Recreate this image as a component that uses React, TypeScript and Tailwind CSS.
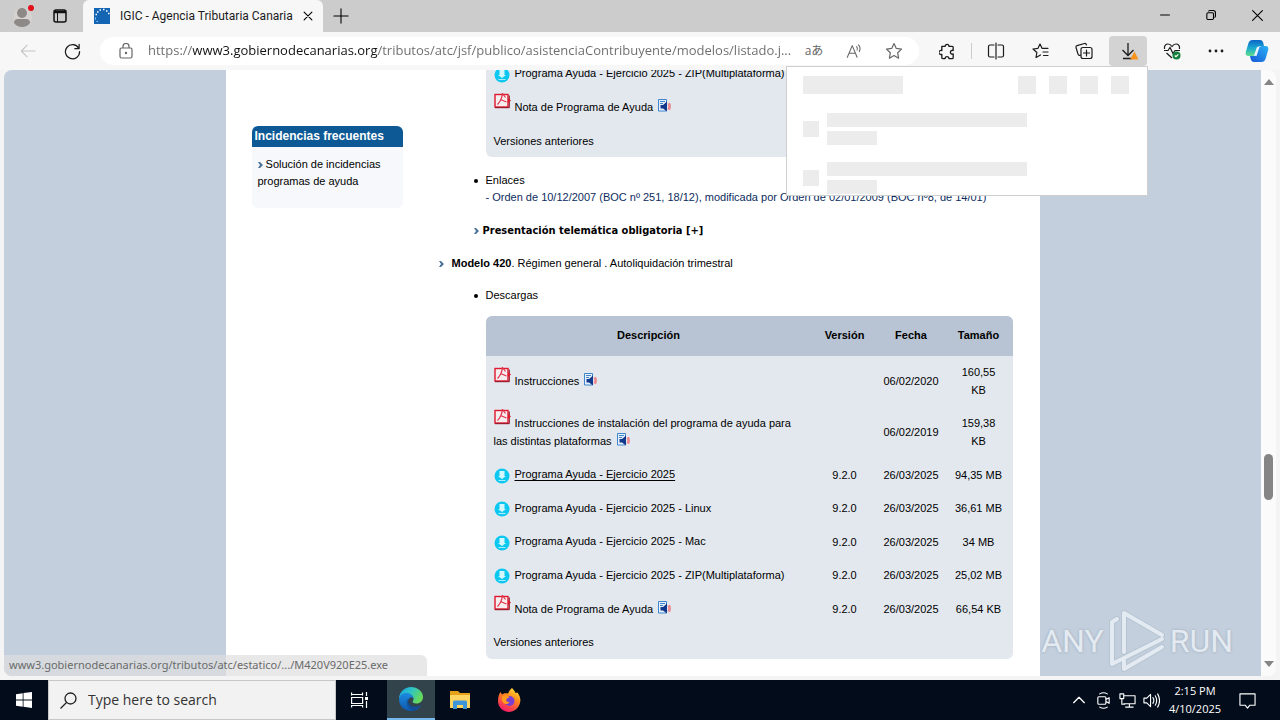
import type { ReactNode } from "react";

interface FileRow {
  kind: "pdf" | "app";
  name: string;
  version?: string;
  date: string;
  size: string;
  audio?: boolean;
  tall?: boolean;
  hovered?: boolean;
}

const FILES_415: FileRow[] = [
  { kind: "app", name: "Programa Ayuda - Ejercicio 2025 - ZIP(Multiplataforma)", date: "", size: "" },
  { kind: "pdf", name: "Nota de Programa de Ayuda", date: "", size: "", audio: true },
];

const FILES_420: FileRow[] = [
  { kind: "pdf", name: "Instrucciones", date: "06/02/2020", size: "160,55 KB", audio: true, tall: true },
  {
    kind: "pdf",
    name: "Instrucciones de instalación del programa de ayuda para las distintas plataformas",
    date: "06/02/2019",
    size: "159,38 KB",
    audio: true,
    tall: true,
  },
  { kind: "app", name: "Programa Ayuda - Ejercicio 2025", version: "9.2.0", date: "26/03/2025", size: "94,35 MB", hovered: true },
  { kind: "app", name: "Programa Ayuda - Ejercicio 2025 - Linux", version: "9.2.0", date: "26/03/2025", size: "36,61 MB" },
  { kind: "app", name: "Programa Ayuda - Ejercicio 2025 - Mac", version: "9.2.0", date: "26/03/2025", size: "34 MB" },
  { kind: "app", name: "Programa Ayuda - Ejercicio 2025 - ZIP(Multiplataforma)", version: "9.2.0", date: "26/03/2025", size: "25,02 MB" },
  { kind: "pdf", name: "Nota de Programa de Ayuda", version: "9.2.0", date: "26/03/2025", size: "66,54 KB", audio: true },
];

function PdfIcon() {
  return (
    <svg viewBox="0 0 17 17" className="-mt-2 mr-1 inline-block h-[17px] w-[17px] align-[2px]">
      <rect x="1" y="2.5" width="13" height="12.5" fill="#f6eeee" stroke="#e0182d" strokeWidth="1.4" />
      <path d="M1 15.7h14.3V3.5" fill="none" stroke="#8c1020" strokeWidth="1" />
      <path d="M3.500 12.500C6 10 8 6.500 8.500 1M6.500 7.500l6 2.500M8.500 1.500l3 4" fill="none" stroke="#e0304a" strokeWidth="1.200" />
      <path d="M14 6l3 2.500L14 11z" fill="#e0182d" />
    </svg>
  );
}

function AppIcon() {
  return (
    <svg viewBox="0 0 16 16" className="mr-[5px] inline-block h-4 w-4 align-middle">
      <circle cx="8" cy="8" r="7.500" fill="#0cc8f0" />
      <path d="M5.500 3h5v5h1.500L8 11 4 8h1.500z" fill="#d4f6fd" />
      <path d="M4.500 12.500h7" stroke="#a9ecfa" strokeWidth="1.200" />
    </svg>
  );
}

function AudioIcon() {
  return (
    <svg viewBox="0 0 13 14" className="-mt-1 ml-[5px] inline-block h-3.5 w-[13px] align-[-2px]">
      <path d="M.5.500h8v11.500h-8z" fill="#e8f1fb" stroke="#3d85cc" />
      <path d="M2 2.500h5M2 4.500h3" stroke="#3d85cc" />
      <path d="M2.500 6H5l4-3.500v10L5 9.500H2.500z" fill="#123a8c" />
      <path d="M10 4.500q2 3 0 6M11.500 4q1.500 3.500 0 7" fill="none" stroke="#ee7f83" strokeWidth="1.200" />
    </svg>
  );
}

function Chevron() {
  return (
    <svg viewBox="0 0 5 6" className="inline-block h-1.5 w-[5px] shrink-0">
      <path d="M0 0h2l3 3-3 3H0l2-3z" fill="#4a7299" />
    </svg>
  );
}

function FileTable({ files, header }: { files: FileRow[]; header?: boolean }) {
  return (
    <table
      className={`w-full table-fixed overflow-hidden rounded-b-md bg-[#e3e8ef] text-center leading-[18px] ${
        header ? "rounded-t-md" : ""
      }`}
    >
      <colgroup>
        <col />
        <col className="w-[66px]" />
        <col className="w-[67px]" />
        <col className="w-[68px]" />
      </colgroup>
      {header && (
        <thead>
          <tr className="h-10 bg-[#b8c4d3]">
            <th className="pb-0.5">Descripción</th>
            <th className="pb-0.5">Versión</th>
            <th className="pb-0.5">Fecha</th>
            <th className="pb-0.5">Tamaño</th>
          </tr>
        </thead>
      )}
      <tbody>
        {files.map((f) => (
          <tr key={f.name} className={f.tall ? "h-[51px] [&>td]:pb-0.5" : "odd:h-[33px] even:h-[34px]"}>
            <td className="pr-4 pl-2 text-left">
              {f.kind === "pdf" ? <PdfIcon /> : <AppIcon />}
              <a href="#descarga" className={f.hovered ? "underline underline-offset-2" : ""}>
                {f.name}
              </a>
              {f.audio && <AudioIcon />}
            </td>
            <td>{f.version}</td>
            <td>{f.date}</td>
            <td className="px-[9px]">{f.size}</td>
          </tr>
        ))}
        <tr className="odd:h-[33px] even:h-[34px]">
          <td colSpan={4} className="pl-2 text-left">
            <a href="#versiones">Versiones anteriores</a>
          </td>
        </tr>
      </tbody>
    </table>
  );
}

function IconButton({ label, className = "w-11", children }: { label: string; className?: string; children: ReactNode }) {
  return (
    <button type="button" aria-label={label} className={`flex h-[30px] shrink-0 items-center justify-center ${className}`}>
      {children}
    </button>
  );
}

function Line({ d, className = "h-[18px] w-[18px]", width = 1.2 }: { d: string; className?: string; width?: number }) {
  return (
    <svg viewBox="0 0 18 18" className={className} fill="none" stroke="currentColor" strokeWidth={width} strokeLinecap="round" strokeLinejoin="round">
      <path d={d} />
    </svg>
  );
}

const STAR = "M9 1.500l2.300 4.900 5.200.7-3.800 3.700.9 5.400L9 13.600l-4.600 2.600.9-5.400L1.500 7.100l5.200-.7z";

function TitleBar() {
  return (
    <div className="flex h-8 shrink-0 bg-[#cccccc]">
      <div className="flex w-[83px] shrink-0 items-center gap-[18px] pl-3.5">
        <button type="button" aria-label="Profile" className="h-6 w-[21px]">
          <svg viewBox="0 0 21 24" className="h-6 w-[21px]">
            <circle cx="8.500" cy="13" r="9.500" fill="#d6d2cf" />
            <circle cx="8" cy="9" r="5" fill="#8c8986" />
            <path d="M0 19q0-4 4-4h8q4 0 4 4-3 4-8 4t-8-4z" fill="#8c8986" />
            <circle cx="17" cy="4" r="3" fill="#e5101c" />
          </svg>
        </button>
        <button type="button" aria-label="Tab actions">
          <svg viewBox="0 0 14 14" className="h-3.5 w-3.5" fill="none" stroke="#111">
            <rect x="1" y="1" width="12" height="12" rx="2" strokeWidth="1.500" />
            <path d="M1 3h12" strokeWidth="2.500" />
            <path d="M4.500 4v9" />
          </svg>
        </button>
      </div>
      <div className="flex w-60 shrink-0 items-center rounded-t-md bg-[#f7f7f7] pr-2.5 pl-[11px]">
        <svg viewBox="0 0 16 16" className="h-4 w-4 shrink-0">
          <path d="M0 0h16v16H0z" fill="#1565b5" />
          <path d="M3 4h1.500M5.500 2H7M9 1.500h1.500M12 3h1.500M14 5.500h1.500M1.500 6.500H3" stroke="#fff" strokeWidth="1.300" />
          <path d="M1.500 9.500v2M2.500 13.500h1.500" stroke="#9cc4ea" />
        </svg>
        <span className="ml-2.5 flex-1 font-[Roboto,sans-serif] text-xs whitespace-nowrap text-[#1b1b1b]">
          IGIC - Agencia Tributaria Canaria
        </span>
        <button type="button" aria-label="Close tab">
          <Line d="M2 2l14 14M16 2L2 16" className="h-2.5 w-2.5" width={2} />
        </button>
      </div>
      <button type="button" aria-label="New tab" className="flex w-9 items-center justify-center">
        <Line d="M9 1v16M1 9h16" className="h-4 w-4" />
      </button>
      <div className="ml-auto flex">
        <IconButton label="Minimize" className="w-[46px]">
          <Line d="M1 9h16" className="h-2.5 w-2.5" width={1.8} />
        </IconButton>
        <IconButton label="Restore" className="w-[46px]">
          <Line d="M3.500 5h8q2 0 2 2v8q0 2-2 2h-8q-2 0-2-2V7q0-2 2-2zM5 2q.5-1 2-1h6q4 0 4 4v6q0 1.500-1 2" className="h-2.5 w-2.5" width={2} />
        </IconButton>
        <IconButton label="Close" className="w-[46px]">
          <Line d="M1 1l16 16M17 1L1 17" className="h-[11px] w-[11px]" width={1.8} />
        </IconButton>
      </div>
    </div>
  );
}

function DownloadsFlyout() {
  return (
    <div className="absolute top-[34px] right-[132px] z-20 h-[130px] w-[362px] overflow-hidden border border-[#cfcfcf] bg-white px-4 pt-[9px]">
      <div className="flex items-center gap-[13px] pr-0.5 pb-0.5">
        <div className="mr-auto h-[18px] w-[100px] bg-[#ececec]" />
        <div className="h-[18px] w-[18px] bg-[#ececec]" />
        <div className="h-[18px] w-[18px] bg-[#ececec]" />
        <div className="h-[18px] w-[18px] bg-[#ececec]" />
        <div className="h-[18px] w-[18px] bg-[#ececec]" />
      </div>
      {[0, 1].map((i) => (
        <div key={i} className="mt-[17px] flex h-8 items-center gap-2">
          <div className="h-4 w-4 bg-[#ececec]" />
          <div className="flex flex-col gap-1">
            <div className="h-3.5 w-[200px] bg-[#ececec]" />
            <div className="h-3.5 w-[50px] bg-[#ececec]" />
          </div>
        </div>
      ))}
    </div>
  );
}

function Toolbar() {
  return (
    <div className="relative flex h-[38px] shrink-0 items-center bg-[#f7f7f7] pr-1 pl-1.5 text-[#1b1b1b]">
      <IconButton label="Back">
        <Line d="M17 9H2M8 2.500L1.500 9 8 15.500" className="h-4 w-4 text-[#c4c4c4]" />
      </IconButton>
      <IconButton label="Refresh">
        <Line d="M15.500 5.500A7.500 7.500 0 1 0 16.500 9M16 1.500v4.500h-4.500" className="h-[17px] w-[17px]" width={1.3} />
      </IconButton>
      <div className="mr-1.5 ml-1.5 flex h-7 flex-1 items-center rounded-full bg-white pl-1 text-[#666]">
        <IconButton label="View site information">
          <svg viewBox="0 0 14 16" className="h-4 w-3.5" fill="none" stroke="currentColor" strokeWidth="1.200">
            <rect x="1" y="5" width="12" height="10" rx="1.500" />
            <path d="M4 5V3.500a3 3 0 0 1 6 0V5" />
            <circle cx="7" cy="10" r=".6" fill="currentColor" />
          </svg>
        </IconButton>
        <input
          type="text"
          aria-label="Address and search bar"
          readOnly
          defaultValue="https://www3.gobiernodecanarias.org/tributos/atc/jsf/publico/asistenciaContribuyente/modelos/listado.j..."
          className="min-w-0 flex-1 bg-[linear-gradient(90deg,#6b6b6b_45px,#111_45px,#111_230px,#6b6b6b_230px)] bg-clip-text text-[13px] text-transparent outline-none"
        />
        <button type="button" aria-label="Translate" className="w-10 text-xs">
          aあ
        </button>
        <IconButton label="Read aloud" className="w-10">
          <Line d="M1.500 16L7 3l5.500 13M3.500 11.500h7M12 4q1.500 2 .5 4M14 2q3 3 1 7.500" className="h-4 w-4" />
        </IconButton>
        <IconButton label="Add to favorites" className="w-10">
          <Line d={STAR} />
        </IconButton>
        <span className="w-[5px]" />
      </div>
      <IconButton label="Extensions">
        <Line d="M3 3.500h3.500a2 2 0 1 1 4 0H14q1 0 1 1V8a2 2 0 1 0 0 3.500v4q0 1-1 1h-3.500a2 2 0 1 0-4 0H4q-1 0-1-1V12a2.200 2.200 0 1 1 0-4z" className="h-[17px] w-[17px]" width={1.4} />
      </IconButton>
      <span className="mx-0.5 h-4 w-px bg-[#cdcdcd]" />
      <IconButton label="Split screen">
        <Line d="M7 3H3Q1.500 3 1.500 4.500v9Q1.500 15 3 15h4M11 3h4q1.500 0 1.500 1.500v9q0 1.500-1.500 1.500h-4M9 1v16" />
      </IconButton>
      <IconButton label="Favorites">
        <Line d="M9.500 13L5 15.500l.9-5L2 7l5-.7L9 2l2 4.300h6M12 10h5M12.500 13.500H17" />
      </IconButton>
      <IconButton label="Collections">
        <Line d="M6 13l-1.500.3Q3.500 13.500 3 12L1 5.500Q.8 4 2 3.700L9.500 1.500q1.500-.3 2 1.500M8 5.500h7q2 0 2 2v7q0 2-2 2H8q-2 0-2-2v-7q0-2 2-2zM11.500 8v6M8.500 11h6" />
      </IconButton>
      <IconButton label="Downloads" className="mx-[3px] w-[38px] rounded-sm bg-[#d3d3d3]">
        <svg viewBox="0 0 20 20" className="h-5 w-5" fill="none" stroke="#1b1b1b" strokeWidth="1.300">
          <path d="M10 2v12M4.500 9l5.500 5.500L15.500 9M5 17.500h9" />
          <path d="M16.500 10.500l4 8h-8.500z" fill="#f7941d" stroke="none" />
        </svg>
      </IconButton>
      <IconButton label="Browser essentials">
        <svg viewBox="0 0 18 18" className="h-[18px] w-[18px]" fill="none" stroke="#1b1b1b" strokeWidth="1.200">
          <path d="M1.500 7C1 3.500 3 2 5 2s3 1 4 2.500C10 3 11 2 13 2s4 1.500 3.500 5M1 8.500h4l2-3 3 6 2-3h5M3.500 11L9 16" />
          <circle cx="13.500" cy="13.500" r="4" fill="#15803c" stroke="none" />
          <path d="M11.800 13.500l1.200 1.200 2.300-2.400" stroke="#fff" />
        </svg>
      </IconButton>
      <IconButton label="Settings and more">
        <svg viewBox="0 0 16 4" className="h-1 w-4" fill="currentColor">
          <circle cx="2" cy="2" r="1.400" />
          <circle cx="8" cy="2" r="1.400" />
          <circle cx="14" cy="2" r="1.400" />
        </svg>
      </IconButton>
      <IconButton label="Copilot" className="w-[38px]">
        <svg viewBox="0 0 24 24" className="h-6 w-6">
          <defs>
            <linearGradient id="cp1" x1="0" y1="0" x2="0" y2="1">
              <stop offset="0" stopColor="#0b64c8" />
              <stop offset=".5" stopColor="#19a9d0" />
              <stop offset="1" stopColor="#5fe08a" />
            </linearGradient>
            <linearGradient id="cp2" x1="1" y1="0" x2="0" y2="1">
              <stop offset="0" stopColor="#2cb3f5" />
              <stop offset="1" stopColor="#1557d6" />
            </linearGradient>
          </defs>
          <path d="M7.500 1H15q2.500 0 3.300 3l.7 3h-4q-2.500 0-3.200 2.500l-1.300 4.500q-.7 3-3.500 3H3.500q-3.500 0-2.700-4L3.500 4Q4.500 1 7.500 1z" fill="url(#cp1)" />
          <path d="M16.500 23H9q-2.500 0-3.300-3L5 17h3q2.500 0 3.200-2.500L13 9.500Q14 7 16.500 7h4q3.500 0 2.700 4L20.500 20q-1 3-4 3z" fill="url(#cp2)" />
          <path d="M14.500 8l-3 9-2.500-.5L12 8z" fill="#e9f6ff" />
        </svg>
      </IconButton>
      <DownloadsFlyout />
    </div>
  );
}

function SitePage() {
  return (
    <div className="flex flex-1 justify-center overflow-hidden bg-[#c3cfdd]">
      <div className="flex w-full max-w-[814px] gap-[34px] bg-white pr-[27px] pl-[26px] font-['Liberation_Sans',Arial,sans-serif] text-[11px] leading-[17px] text-black">
        <aside className="mt-14 w-[151px] shrink-0">
          <h2 className="rounded-t-md bg-[#0d5995] px-[3px] text-xs leading-[21px] font-bold whitespace-nowrap text-white">
            Incidencias frecuentes
          </h2>
          <div className="h-[61px] rounded-b-md bg-[#f6f8fb] px-1.5 pt-[9px]">
            <a href="#incidencias">
              <Chevron /> Solución de incidencias programas de ayuda
            </a>
          </div>
        </aside>

        <main className="-mt-[13px] min-w-0 flex-1">
          <div className="pl-[49px]">
            <FileTable files={FILES_415} />
            <ul className="mt-[15px] list-none">
              <li>
                <div className="-ml-3 flex items-center gap-2">
                  <span className="h-1 w-1 rounded-full bg-black" />
                  Enlaces
                </div>
                <a href="#orden" className="block text-[#0c2c5e]">
                  - Orden de 10/12/2007 (BOC nº 251, 18/12), modificada por Orden de 02/01/2009 (BOC nº8, de 14/01)
                </a>
              </li>
            </ul>
            <h4 className="mt-4 -ml-3 flex items-center gap-1 font-['DejaVu_Sans_Condensed','DejaVu_Sans',sans-serif] text-[11px] font-bold">
              <Chevron />
              <a href="#telematica">Presentación telemática obligatoria [+]</a>
            </h4>
          </div>

          <div className="mt-4 flex items-center gap-2 pl-0.5">
            <Chevron />
            <p>
              <b>Modelo 420</b>. Régimen general . Autoliquidación trimestral
            </p>
          </div>

          <div className="pl-[49px]">
            <div className="mt-[15px] mb-3 -ml-3 flex items-center gap-2">
              <span className="h-1 w-1 rounded-full bg-black" />
              Descargas
            </div>
            <FileTable files={FILES_420} header />
          </div>
        </main>
      </div>
    </div>
  );
}

function Watermark() {
  return (
    <div className="pointer-events-none absolute right-[43px] bottom-1 flex items-center gap-1 font-[Roboto,sans-serif] text-[32px] leading-none font-normal text-[#e4eaf1] [text-shadow:0_0_3px_#9aa8b8]">
      <span>ANY</span>
      <svg viewBox="0 0 58 62" className="h-[62px] w-[58px]" fill="none" stroke="#e4eaf1" strokeWidth="4" strokeLinecap="round" strokeLinejoin="round">
        <path d="M16 42V3l38 22M9 9L4 12v42L54 29M16 50v9L54 37" stroke="#aebccb" strokeWidth="6" opacity=".6" />
        <path d="M16 42V3l38 22M9 9L4 12v42L54 29M16 50v9L54 37" />
      </svg>
      <span>RUN</span>
    </div>
  );
}

function Scrollbar() {
  return (
    <div className="flex w-[15px] shrink-0 flex-col items-center bg-[#fbfbfb] py-[9px]">
      <svg viewBox="0 0 10 6" className="h-1.5 w-2.5">
        <path d="M5 0l5 6H0z" fill="#858585" />
      </svg>
      <div className="mt-[369px] h-[46px] w-[9px] rounded-full bg-[#858585]" />
      <svg viewBox="0 0 10 6" className="mt-auto h-1.5 w-2.5">
        <path d="M5 6l5-6H0z" fill="#858585" />
      </svg>
    </div>
  );
}

function Taskbar() {
  return (
    <div className="flex h-10 shrink-0 bg-[#020c1a] text-white">
      <button type="button" aria-label="Start" className="flex w-12 items-center justify-center">
        <svg viewBox="0 0 16 16" className="h-4 w-4" fill="#fff">
          <path d="M0 2.200l6.700-1v6.300H0zM7.500 1.100L16 0v7.500H7.500zM0 8.400h6.700v6.300l-6.700-1zM7.500 8.400H16V16l-8.500-1.200z" />
        </svg>
      </button>
      <label className="flex w-72 items-center gap-[11px] border border-[#c8c8c8] bg-[#f2f2f2] pl-[11px] text-[#222]">
        <svg viewBox="0 0 17 17" className="h-[17px] w-[17px] shrink-0" fill="none" stroke="#222" strokeWidth="1.300">
          <circle cx="10.500" cy="6.500" r="5.500" />
          <path d="M6.500 10.500L.5 16.500" />
        </svg>
        <input
          type="text"
          aria-label="Type here to search"
          placeholder="Type here to search"
          className="min-w-0 flex-1 text-sm outline-none placeholder:text-[#333]"
        />
      </label>
      <button type="button" aria-label="Task view" className="flex w-[51px] items-center justify-center pr-1">
        <svg viewBox="0 0 17 16" className="h-4 w-[17px]" fill="none" stroke="#fff" strokeWidth="1.200">
          <path d="M.6 3.500V.5M.6 2.500h11M11.500 3.500V.5M.6 5.500h11v6H.6zM.6 15.500v-2h11v2M15.500 0v4M15.500 9v7" />
          <path d="M14 5h3v3h-3z" fill="#fff" stroke="none" />
        </svg>
      </button>
      <button type="button" aria-label="Microsoft Edge" className="flex w-12 items-center justify-center border-b-2 border-[#76b9ed] bg-[#33434c]">
        <svg viewBox="0 0 24 24" className="h-6 w-6">
          <defs>
            <linearGradient id="eg1" x1="0" y1="0" x2="1" y2=".4">
              <stop offset="0" stopColor="#1b9de2" />
              <stop offset=".5" stopColor="#2cc3c7" />
              <stop offset="1" stopColor="#66d95c" />
            </linearGradient>
            <linearGradient id="eg2" x1="0" y1="0" x2="0" y2="1">
              <stop offset="0" stopColor="#1c8be0" />
              <stop offset="1" stopColor="#0f58ad" />
            </linearGradient>
          </defs>
          <path d="M0 12C0 5 5.500 0 12 0s12 4.500 12 10c0 4-3 6.500-6.500 6.500-3 0-4.500-1-3.700-2.200C16 11 13 7.500 9 7.500 4 7.500.5 10 0 12z" fill="url(#eg1)" />
          <path d="M0 12c.5-4 4-6 7.500-6 4 0 7 2.500 7 5.500-1-1-2-1.500-3-1-5 3-2 9.500 4 9.500 3 0 5-1 6.500-2C20 22 16 24 12 24 5 24 0 19 0 12z" fill="url(#eg2)" />
          <path d="M9.500 11c-4 4-1 11.500 5 12.700 3-.7 6-3 7.500-5.700-6 3-13 1-12.500-7z" fill="#123f80" opacity=".55" />
        </svg>
      </button>
      <button type="button" aria-label="File Explorer" className="flex w-[50px] items-center justify-center">
        <svg viewBox="0 0 22 20" className="h-5 w-[22px]">
          <path d="M1 1h8l2 2h10v5H1z" fill="#e3a21a" />
          <path d="M1 5h20v13H1z" fill="#fcd462" />
          <path d="M4 19v-7q0-1.500 1.500-1.500h11q1.500 0 1.500 1.500v7h-4v-4H8v4z" fill="#3d94d9" />
        </svg>
      </button>
      <button type="button" aria-label="Firefox" className="flex w-12 items-center justify-center">
        <svg viewBox="0 0 24 24" className="h-6 w-6">
          <defs>
            <linearGradient id="ff" x1=".8" y1="0" x2=".3" y2="1">
              <stop offset="0" stopColor="#ffe23a" />
              <stop offset=".4" stopColor="#ff8a1c" />
              <stop offset="1" stopColor="#f5156c" />
            </linearGradient>
          </defs>
          <path d="M15 0c2 2 3 3.500 3.500 5l2-.5C23 8 24 11 23 15c-1.500 5.500-6 9-11 9S1 20 1 13c0-4 1-7 2.500-9L5 6.500C7 5 9 5 11 5.500 12 3 13.500 1 15 0z" fill="url(#ff)" />
          <circle cx="12.500" cy="13" r="5" fill="#7a3fd0" />
          <path d="M5 8.500c3-2 6-1 7.500.5l-3 2c-1 2 1 3.500 3 3-2 4-9 2-7.500-5.500z" fill="#ff9a1f" />
        </svg>
      </button>

      <div className="ml-auto flex items-center">
        <button type="button" aria-label="Show hidden icons" className="flex w-6 justify-center">
          <Line d="M1 13l8-8 8 8" className="h-3 w-3" width={2} />
        </button>
        <button type="button" aria-label="Meet now" className="flex w-6 justify-center">
          <Line d="M5 2q4-2.500 8 0M5 16q4 2.500 8 0M4 5h6.500q1 0 1 1v6q0 1-1 1H4q-1 0-1-1V6q0-1 1-1zM11.500 8L15 6v6l-3.500-2" className="h-[17px] w-[17px]" />
        </button>
        <button type="button" aria-label="Network" className="flex w-6 justify-center">
          <Line d="M5 4h12v8.500H5M11 12.500V16M7 16h8M1 2h4v5H1zM3 7v6h3" className="h-[17px] w-[17px]" />
        </button>
        <button type="button" aria-label="Volume" className="flex w-6 justify-center">
          <Line d="M1 6.500h3l4-4v13l-4-4H1zM10.500 6q2 3 0 6M13 4q3 5 0 10M15.500 2q4 7 0 14" className="h-[17px] w-[17px]" />
        </button>
        <button type="button" className="w-16 font-['Open_Sans',sans-serif] text-[11px] leading-[18px]">
          2:15 PM
          <br />
          4/10/2025
        </button>
        <button type="button" aria-label="Notifications" className="mr-[13px] flex w-10 justify-center">
          <Line d="M1 2h16v12h-5.500L9 17l-2.500-3H1z" className="h-[17px] w-[17px]" />
        </button>
      </div>
    </div>
  );
}

export default function App() {
  return (
    <div className="flex h-screen flex-col overflow-hidden bg-[#f4f4f4] font-['Open_Sans','Noto_Sans','Noto_Sans_CJK_JP',sans-serif]">
      <TitleBar />
      <Toolbar />
      <div className="relative mx-1 mb-1 flex min-h-0 flex-1 overflow-hidden rounded-lg">
        <SitePage />
        <Scrollbar />
        <Watermark />
        <div className="absolute bottom-0 left-0 h-[21px] w-[423px] rounded-tr-md bg-[#dedede]/70 pl-[5px] font-['Noto_Sans',sans-serif] text-[11px] leading-5 text-[#6a6a6a]">
          www3.gobiernodecanarias.org/tributos/atc/estatico/.../M420V920E25.exe
        </div>
      </div>
      <Taskbar />
    </div>
  );
}
